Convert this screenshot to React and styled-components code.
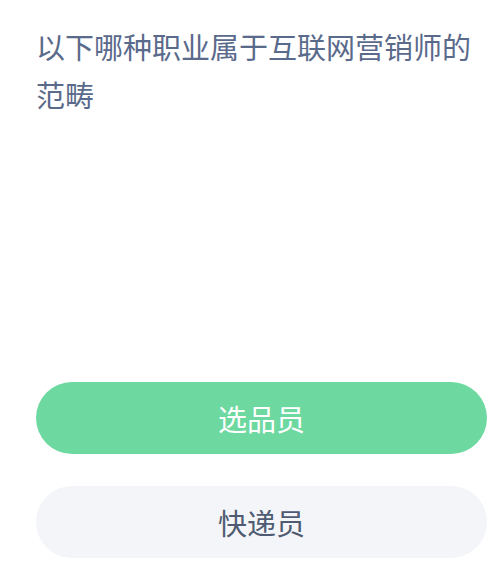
import React from 'react';
import styled, { createGlobalStyle } from 'styled-components';

const GlobalStyle = createGlobalStyle`
    html, body {
        margin: 0;
        padding: 0;
        background: #ffffff;
    }
    body {
        font-family: "Noto Sans CJK SC", "Noto Sans", sans-serif;
    }
`

const Page = styled.div`
    width: 501px;
    height: 576px;
    box-sizing: border-box;
    padding: 22px 14px 0 36px;
    display: flex;
    flex-direction: column;
    overflow: hidden;
`

const Question = styled.h1`
    margin: 0;
    max-width: 445px;
    font-size: 29px;
    font-weight: 400;
    line-height: 48px;
    color: #5a6a8b;
    letter-spacing: 0;
`

const Options = styled.div`
    margin-top: 264px;
    display: flex;
    flex-direction: column;
    gap: 32px;
`

const Option = styled.button`
    height: 72px;
    width: 451px;
    border: none;
    border-radius: 36px;
    font-family: inherit;
    font-size: 29px;
    display: flex;
    align-items: center;
    justify-content: center;
    cursor: pointer;
    background: ${p => (p.$selected ? '#6dd89f' : '#f4f5f8')};
    color: ${p => (p.$selected ? '#ffffff' : '#4f5b72')};
`

const answers = [
    { text: '选品员', selected: true },
    { text: '快递员', selected: false },
];

export default function App() {
    return (
        <>
            <GlobalStyle />
            <Page>
                <Question>以下哪种职业属于互联网营销师的范畴</Question>
                <Options>
                    {answers.map(a => (
                        <Option key={a.text} $selected={a.selected}>{a.text}</Option>
                    ))}
                </Options>
            </Page>
        </>
    );
}
